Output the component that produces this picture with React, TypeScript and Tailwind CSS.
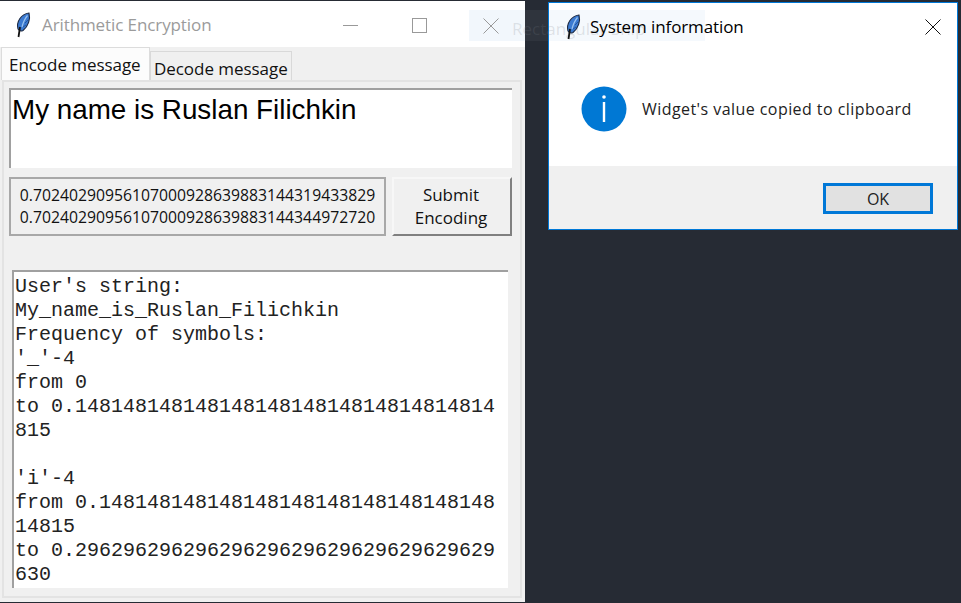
const segoe = { fontFamily: '"Open Sans", sans-serif' };

const Feather = ({ className }: { className: string }) => (
    <svg viewBox="0 0 16 26" className={className}>
        <path d="M3 17 C1 10 6 2 14 1 C15.5 7 13.5 14 8 18.5 C6 19.5 4 18.5 3 17 Z" fill="#3b7ad1" stroke="#1c2a44" strokeWidth="1.1" />
        <path d="M12.5 3.5 C9.5 7 8 11 7 15" fill="none" stroke="#9cc4ef" strokeWidth="1.2" />
        <path d="M10 11 L13 8 M8 15 L11 13" fill="none" stroke="#1f4f96" strokeWidth="0.8" />
        <path d="M5 15 L3.5 25" fill="none" stroke="#111" strokeWidth="1.8" />
    </svg>
);

const logLines = [
    "User's string:",
    "My_name_is_Ruslan_Filichkin",
    "Frequency of symbols:",
    "'_'-4",
    "from 0",
    "to 0.14814814814814814814814814814814814",
    "815",
    "\u00a0",
    "'i'-4",
    "from 0.148148148148148148148148148148148",
    "14815",
    "to 0.29629629629629629629629629629629629",
    "630",
];

export default function App() {
    return (
        <div className="relative w-[961px] h-[603px] overflow-hidden bg-[#262b34] pt-px pb-px">
            {/* Main window */}
            <div className="w-[525px] h-[601px] bg-[#f0f0f0] flex flex-col">
                <div className="h-[46px] shrink-0 bg-white flex items-center pl-[15px] pt-[2px]">
                    <Feather className="w-[16px] h-[26px] mr-[11px]" />
                    <span className="text-[17px] text-[#9b9b9b] tracking-[-0.1px]" style={segoe}>Arithmetic Encryption</span>
                    <div className="ml-[132px] w-[15px] h-px bg-[#999]" />
                    <div className="ml-[54px] w-[15px] h-[15px] border border-[#999]" />
                </div>

                {/* Tabs */}
                <div className="h-[33px] shrink-0 flex items-end pl-[1px] text-[#111]" style={segoe}>
                    <div className="w-[149px] h-[33px] bg-[#fcfcfc] border border-b-0 border-[#dcdcdc] pl-[7px] text-[17px] leading-[33px] tracking-[-0.05px]">Encode message</div>
                    <div className="w-[142px] h-[29px] bg-[#f0f0f0] border border-b-0 border-[#d9d9d9] pl-[3px] text-[17px] leading-[33px] tracking-[-0.05px]">Decode message</div>
                </div>

                {/* Notebook panel */}
                <div className="mx-[2px] w-[520px] h-[518px] border-2 border-[#e3e3e3] pt-[6px] pl-[5px] pr-[8px] overflow-hidden">
                    <div className="w-[503px] h-[80px] bg-white border-t-2 border-l-2 border-[#a0a0a0] pl-px text-[27.8px] leading-[39px] text-black" style={{ fontFamily: '"Liberation Sans", sans-serif' }}>
                        My name is Ruslan Filichkin
                    </div>

                    <div className="mt-[9px] flex gap-[6px]" style={segoe}>
                        <div className="w-[377px] h-[59px] border-2 border-[#a8a8a8] flex flex-col items-center justify-center text-[15.75px] leading-[22px] text-[#111] pb-[1px]">
                            <span>0.70240290956107000928639883144319433829</span>
                            <span>0.70240290956107000928639883144344972720</span>
                        </div>
                        <div className="w-[120px] h-[59px] border-2 border-t-[#f7f7f7] border-l-[#f7f7f7] border-r-[#808080] border-b-[#808080] flex flex-col items-center justify-center text-[17px] leading-[23px] text-[#111] pr-[2px] pb-[2px]">
                            <span>Submit</span>
                            <span>Encoding</span>
                        </div>
                    </div>

                    <div className="mt-[34px] ml-[3px] w-[496px] h-[318px] bg-white border-t-2 border-l-2 border-[#a0a0a0] pt-[3px] pl-px overflow-hidden text-[20px] leading-[24px] text-[#222]" style={{ fontFamily: '"Liberation Mono", monospace' }}>
                        {logLines.map((line, i) => (
                            <div key={i} className="whitespace-pre h-[24px]">{line}</div>
                        ))}
                    </div>
                </div>
            </div>

            {/* Snipping tool band behind the dialog */}
            <div className="absolute left-[469px] top-[10px] w-[56px] h-[31px] bg-[#f2f7fc] flex items-center pl-[14px]">
                <svg viewBox="0 0 16 16" className="w-[16px] h-[16px] shrink-0">
                    <path d="M0.5 0.5 L15.5 15.5 M15.5 0.5 L0.5 15.5" stroke="#999" strokeWidth="1" />
                </svg>
            </div>
            <div className="absolute left-[525px] top-[10px] w-[23px] h-[31px] bg-[#2f343d]" />

            {/* Message dialog */}
            <div className="absolute left-[548px] top-[2px] w-[410px] h-[228px] border border-[#0078d7] bg-white flex flex-col" style={segoe}>
                <div className="absolute left-0 top-[7px] w-[156px] h-[31px] bg-[#f5f9fd]" />
                <span className="absolute left-[-37px] top-[13px] text-[17px] text-[#787d8733] whitespace-nowrap">Rectangular Snip</span>
                <div className="relative h-[46px] shrink-0 flex items-center pl-[16px] pr-[16px] pt-[2px]">
                    <Feather className="w-[16px] h-[26px] mr-[9px]" />
                    <span className="text-[17px] text-black tracking-[-0.1px]">System information</span>
                    <svg viewBox="0 0 16 16" className="ml-auto w-[16px] h-[16px]">
                        <path d="M0.5 0.5 L15.5 15.5 M15.5 0.5 L0.5 15.5" stroke="#111" strokeWidth="1" />
                    </svg>
                </div>
                <div className="h-[117px] shrink-0 flex items-start pl-[32px] pt-[37px]">
                    <svg viewBox="0 0 46 46" className="w-[46px] h-[46px] shrink-0">
                        <circle cx="23" cy="23" r="22.5" fill="#0078d4" />
                        <circle cx="23" cy="11" r="1.8" fill="#fff" />
                        <rect x="21.8" y="16" width="2.4" height="20" fill="#fff" />
                    </svg>
                    <span className="ml-[15px] mt-[12px] text-[16px] leading-[22px] tracking-[0.44px] text-[#222]">Widget's value copied to clipboard</span>
                </div>
                <div className="flex-1 bg-[#f0f0f0] flex justify-end items-start pt-[17px] pr-[24px]">
                    <div className="w-[110px] h-[31px] bg-[#e1e1e1] border-[3px] border-[#0078d7] flex items-center justify-center text-[16px] text-[#222]">OK</div>
                </div>
            </div>
        </div>
    );
}
